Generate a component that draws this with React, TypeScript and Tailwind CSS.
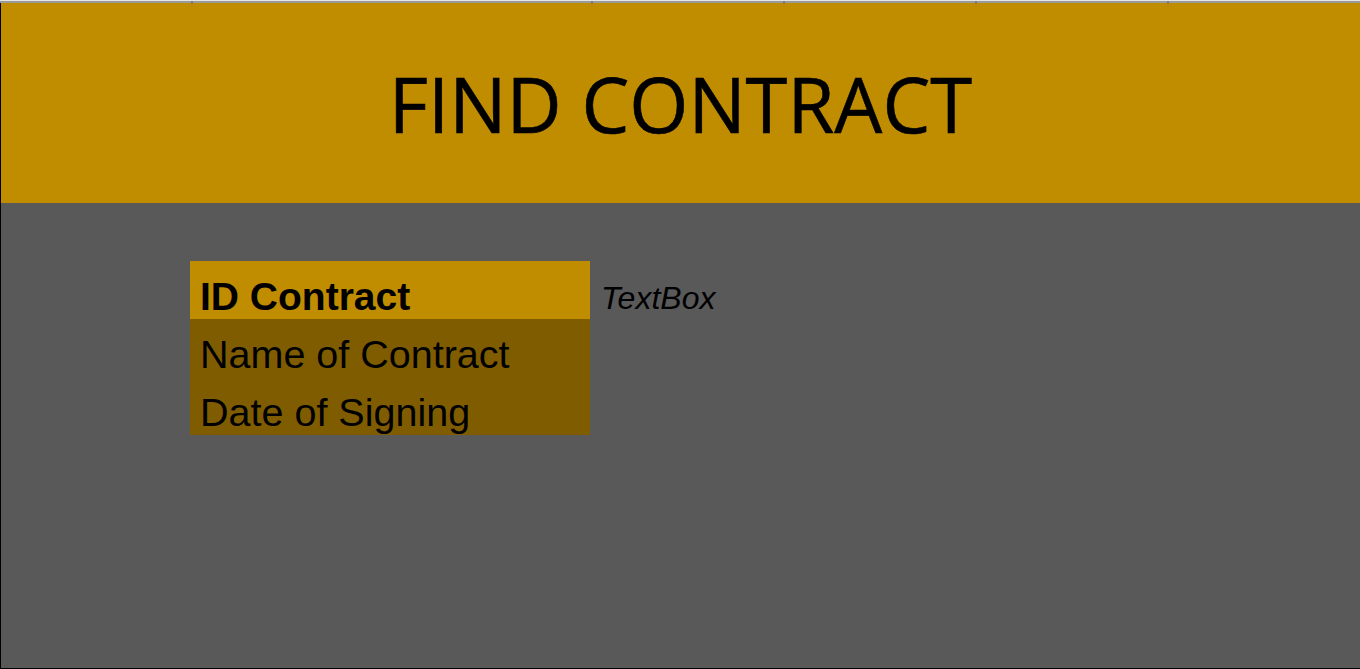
import React from "react";

export default function App() {
  const ticks = [191, 591, 783, 975, 1167];
  return (
    <div className="w-[1360px] h-[669px] flex flex-col bg-[#595959] overflow-hidden">
      <div className="relative h-[3px] shrink-0 bg-[#9a9a9a] border-t border-[#e6e6e6]">
        {ticks.map((x) => (
          <div key={x} className="absolute top-0 h-[3px] w-[2px] bg-[#7a7a7a]" style={{ left: x }} />
        ))}
      </div>
      <div className="flex-1 flex flex-col border-l border-b border-black">
        <div className="h-[200px] shrink-0 bg-[#c08c00] flex items-center justify-center">
          <h1
            className="text-[76px] leading-none text-black pt-[2px] [-webkit-text-stroke:0.6px_black]"
            style={{ fontFamily: '"Open Sans", sans-serif' }}
          >
            FIND CONTRACT
          </h1>
        </div>
        <div
          className="flex-1 pl-[189px] pt-[58px] flex items-start"
          style={{ fontFamily: '"Liberation Sans", Arial, sans-serif' }}
        >
          <div className="w-[400px] flex flex-col">
            <div className="h-[58px] bg-[#c08c00] flex items-end pl-[10px] pb-[3px]">
              <span className="text-[39px] font-bold leading-none text-black">ID Contract</span>
            </div>
            <div className="bg-[#7f5c00] flex flex-col">
              <div className="h-[58px] flex items-end pl-[10px] pb-[3px]">
                <span className="text-[39.5px] leading-none text-black">Name of Contract</span>
              </div>
              <div className="h-[58px] flex items-end pl-[10px] pb-[3px]">
                <span className="text-[39.5px] leading-none text-black">Date of Signing</span>
              </div>
            </div>
          </div>
          <div className="h-[58px] flex items-end pl-[11px] pb-[5px]">
            <span className="text-[32px] italic leading-none text-black">TextBox</span>
          </div>
        </div>
      </div>
    </div>
  );
}
